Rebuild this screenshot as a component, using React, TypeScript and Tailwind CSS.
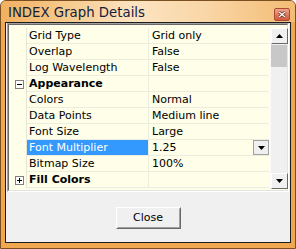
import React from "react";

type Row =
  | { kind: "prop"; label: string; value: string; selected?: boolean }
  | { kind: "cat"; label: string; expanded: boolean };

const rows: Row[] = [
  { kind: "prop", label: "Grid Type", value: "Grid only" },
  { kind: "prop", label: "Overlap", value: "False" },
  { kind: "prop", label: "Log Wavelength", value: "False" },
  { kind: "cat", label: "Appearance", expanded: true },
  { kind: "prop", label: "Colors", value: "Normal" },
  { kind: "prop", label: "Data Points", value: "Medium line" },
  { kind: "prop", label: "Font Size", value: "Large" },
  { kind: "prop", label: "Font Multiplier", value: "1.25", selected: true },
  { kind: "prop", label: "Bitmap Size", value: "100%" },
  { kind: "cat", label: "Fill Colors", expanded: false },
];

function Tri({ up }: { up?: boolean }) {
  return (
    <svg width="7" height="4" viewBox="0 0 7 4">
      {up ? <polygon points="0,4 7,4 3.5,0" fill="#000" /> : <polygon points="0,0 7,0 3.5,4" fill="#000" />}
    </svg>
  );
}

function ScrollBtn({ up }: { up?: boolean }) {
  return (
    <div className="h-[16px] w-[17px] border border-t-white border-l-white border-r-[#696969] border-b-[#696969] bg-[#f0f0f0] flex items-center justify-center">
      <Tri up={up} />
    </div>
  );
}

function Box({ plus }: { plus: boolean }) {
  return (
    <div className="relative w-[9px] h-[9px] border border-[#808080] bg-white">
      <div className="absolute left-[1px] top-[3px] w-[5px] h-[1px] bg-black" />
      {plus && <div className="absolute left-[3px] top-[1px] w-[1px] h-[5px] bg-black" />}
    </div>
  );
}

export default function App() {
  return (
    <div
      className="w-[296px] h-[249px] flex flex-col border border-[#7a5020] rounded-t-[6px] bg-[#f0a850] overflow-hidden"
      style={{ fontFamily: '"DejaVu Sans", Verdana, sans-serif' }}
    >
      <div className="h-[21px] flex items-center pl-[7px] pr-[5px] pt-[3px] bg-[linear-gradient(to_right,#f2b060_0%,#f7cd94_25%,#fce4c2_45%,#f9d6a6_70%,#f3bc74_100%)]">
        <span className="text-[13.3px] text-[#14203a] leading-none flex-1">INDEX Graph Details</span>
        <div className="w-[16px] h-[13px] mt-[2px] rounded-[2px] border border-[#a84a34] bg-[linear-gradient(to_bottom,#f0a48a,#d0583c)] flex items-center justify-center">
          <svg width="8" height="7" viewBox="0 0 8 7">
            <path d="M1 1 L7 6 M7 1 L1 6" stroke="#5a1a10" strokeWidth="2.6" />
            <path d="M1 1 L7 6 M7 1 L1 6" stroke="#fff" strokeWidth="1.4" />
          </svg>
        </div>
      </div>
      <div className="flex-1 mx-[4px] mb-[5px] border border-[#1c1c1c] bg-[#f0f0f0] flex flex-col">
        <div className="mx-[1px] border border-[#a0a0a0] border-r-white border-b-white">
          <div className="border border-[#696969] border-r-[#e3e3e3] border-b-[#e3e3e3] bg-[#fefee9] pt-[3px] pb-[1px] flex text-[11px] text-black">
            <div className="flex-1 flex flex-col">
              {rows.map((r, i) => (
                <div key={i} className="flex h-[16px]">
                  <div className="w-[18px] border-r border-[#e6e6d6] flex items-center pl-[6px]">
                    {r.kind === "cat" && <Box plus={!r.expanded} />}
                  </div>
                  {r.kind === "cat" ? (
                    <>
                      <div className="w-[122px] border-r border-b border-[#ececdf] pl-[2px] font-bold leading-[15px] whitespace-nowrap">
                        {r.label}
                      </div>
                      <div className="flex-1 border-b border-[#ececdf]" />
                    </>
                  ) : (
                    <>
                      <div className="w-[122px] border-r border-b border-[#ececdf] pl-[2px] leading-[15px] whitespace-nowrap">
                        <div className={r.selected ? "bg-[#3399ff] text-white -ml-[2px] pl-[2px] h-[15px]" : ""}>{r.label}</div>
                      </div>
                      <div className="flex-1 border-b border-[#ececdf] pl-[3px] leading-[15px] whitespace-nowrap flex">
                        <span className="flex-1">{r.value}</span>
                        {r.selected && (
                          <div className="w-[16px] h-[15px] border border-[#a0a0a0] bg-[#f0f0f0] flex items-center justify-center">
                            <Tri />
                          </div>
                        )}
                      </div>
                    </>
                  )}
                </div>
              ))}
            </div>
            <div className="w-[1px]" />
            <div className="w-[17px] h-[161px] flex flex-col bg-[#f0f0f0] border-l border-[#fafafa]">
              <ScrollBtn up />
              <div className="h-[22px] bg-[#c8c8c8] mt-[1px]" />
              <div className="flex-1" />
              <ScrollBtn />
            </div>
          </div>
        </div>
        <div className="flex justify-center mt-[15px]">
          <div className="w-[65px] h-[22px] border border-t-white border-l-white border-r-[#696969] border-b-[#696969] bg-[#f0f0f0]">
            <div className="w-full h-full border border-transparent border-r-[#a0a0a0] border-b-[#a0a0a0] flex items-center justify-center text-[11px] text-black pt-[1px]">
              Close
            </div>
          </div>
        </div>
      </div>
    </div>
  );
}
